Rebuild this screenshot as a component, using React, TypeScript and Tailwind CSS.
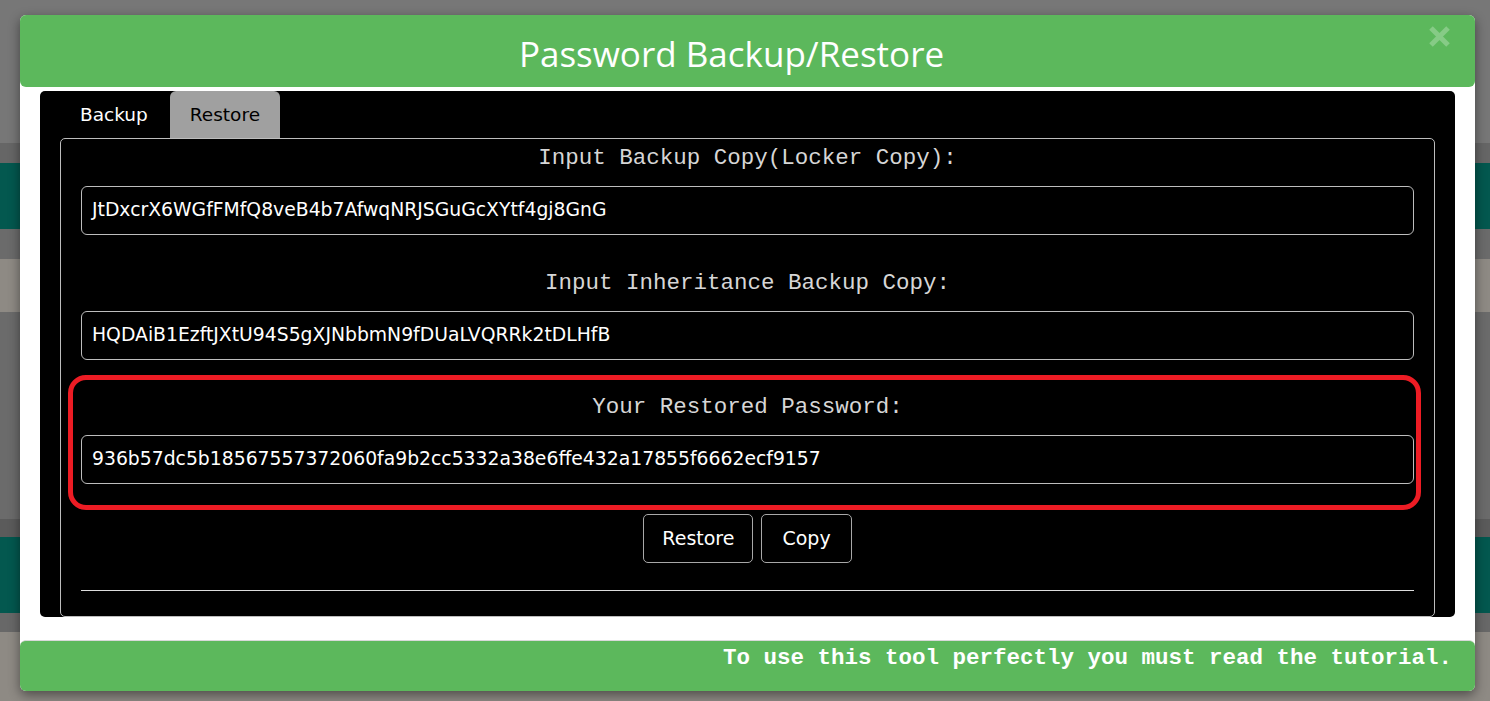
const mono = { fontFamily: '"Liberation Mono", "Courier New", monospace' };

function Field({ label, value }: { label: string; value: string }) {
  return (
    <div>
      <p className="h-[24px] text-center text-[22.5px] leading-[24px] text-[#d6d6d6] font-['Liberation_Mono',monospace]">
        {label}
      </p>
      <div className="mt-[16px] flex h-[49px] items-center rounded-[6px] border border-[#bdbdbd] px-[10px] text-[18.8px] text-white font-['DejaVu_Sans',sans-serif]">
        {value}
      </div>
    </div>
  );
}

export default function App() {
  return (
    <div className="relative h-[701px] w-[1490px] overflow-hidden bg-[#777777]">
      {/* page behind the overlay */}
      <div className="flex flex-col">
        <div className="h-[143px] bg-[#777777]" />
        <div className="h-[20px] bg-[#666666]" />
        <div className="h-[66px] bg-[#03584f]" />
        <div className="h-[30px] bg-[#6b6b6b]" />
        <div className="h-[53px] bg-[#8e8a84]" />
        <div className="h-[207px] bg-[#6b6b6b]" />
        <div className="h-[18px] bg-[#5b5b5b]" />
        <div className="h-[76px] bg-[#03584f]" />
        <div className="h-[19px] bg-[#686868]" />
        <div className="h-[69px] bg-[#8e8a84]" />
      </div>

      {/* modal */}
      <div className="absolute left-[20px] top-[15px] w-[1455px] rounded-[6px] bg-white shadow-[0_4px_12px_rgba(0,0,0,0.45)]">
        <div className="relative flex h-[72px] items-center justify-center rounded-[6px] bg-[#5cb85c] pr-[32px] pt-[6px]">
          <h1 className="text-[35px] text-white font-['Open_Sans',sans-serif]">Password Backup/Restore</h1>
          <svg className="absolute right-[24px] top-[10px]" width="23" height="23" viewBox="0 0 23 23">
            <path d="M3 3 L20 20 M20 3 L3 20" stroke="#86cb86" strokeWidth="5" strokeLinecap="butt" />
          </svg>
        </div>

        <div className="px-[20px] pb-[23px] pt-[4px]">
          <div className="rounded-[5px] bg-black px-[20px]">
            <div className="flex h-[47px] items-stretch gap-[2px] text-[18.5px] font-['DejaVu_Sans',sans-serif]">
              <div className="flex items-center px-[20px] text-white">Backup</div>
              <div className="flex items-center rounded-t-[6px] bg-[#a0a0a0] px-[20px] text-black">Restore</div>
            </div>

            <div className="rounded-[5px] border border-[#bdbdbd] px-[20px] pb-[25px] pt-[7px]">
              <Field label="Input Backup Copy(Locker Copy):" value="JtDxcrX6WGfFMfQ8veB4b7AfwqNRJSGuGcXYtf4gj8GnG" />
              <div className="mt-[36px]">
                <Field label="Input Inheritance Backup Copy:" value="HQDAiB1EzftJXtU94S5gXJNbbmN9fDUaLVQRRk2tDLHfB" />
              </div>

              <div className="-ml-[13px] -mr-[7px] mt-[15px] rounded-[18px] border-[5px] border-[#ed1c24] pb-[21px] pl-[8px] pr-[2px] pt-[15px]">
                <Field label="Your Restored Password:" value="936b57dc5b18567557372060fa9b2cc5332a38e6ffe432a17855f6662ecf9157" />
              </div>

              <div className="mt-[4px] flex justify-center gap-[8px] text-[19px] text-white font-['DejaVu_Sans',sans-serif]">
                <button className="h-[49px] rounded-[5px] border border-[#a8a8a8] px-[18px]">Restore</button>
                <button className="h-[49px] rounded-[5px] border border-[#a8a8a8] px-[20px]">Copy</button>
              </div>

              <div className="mt-[27px] h-px bg-[#dddddd]" />
            </div>
          </div>
        </div>

        <div className="h-[51px] rounded-[6px] border-t border-[#d9d9d9] bg-[#5cb85c] pr-[23px] pt-[5px] text-right">
          <p className="text-[22.5px] font-bold leading-[24px] text-white" style={mono}>
            To use this tool perfectly you must read the tutorial.
          </p>
        </div>
      </div>
    </div>
  );
}
